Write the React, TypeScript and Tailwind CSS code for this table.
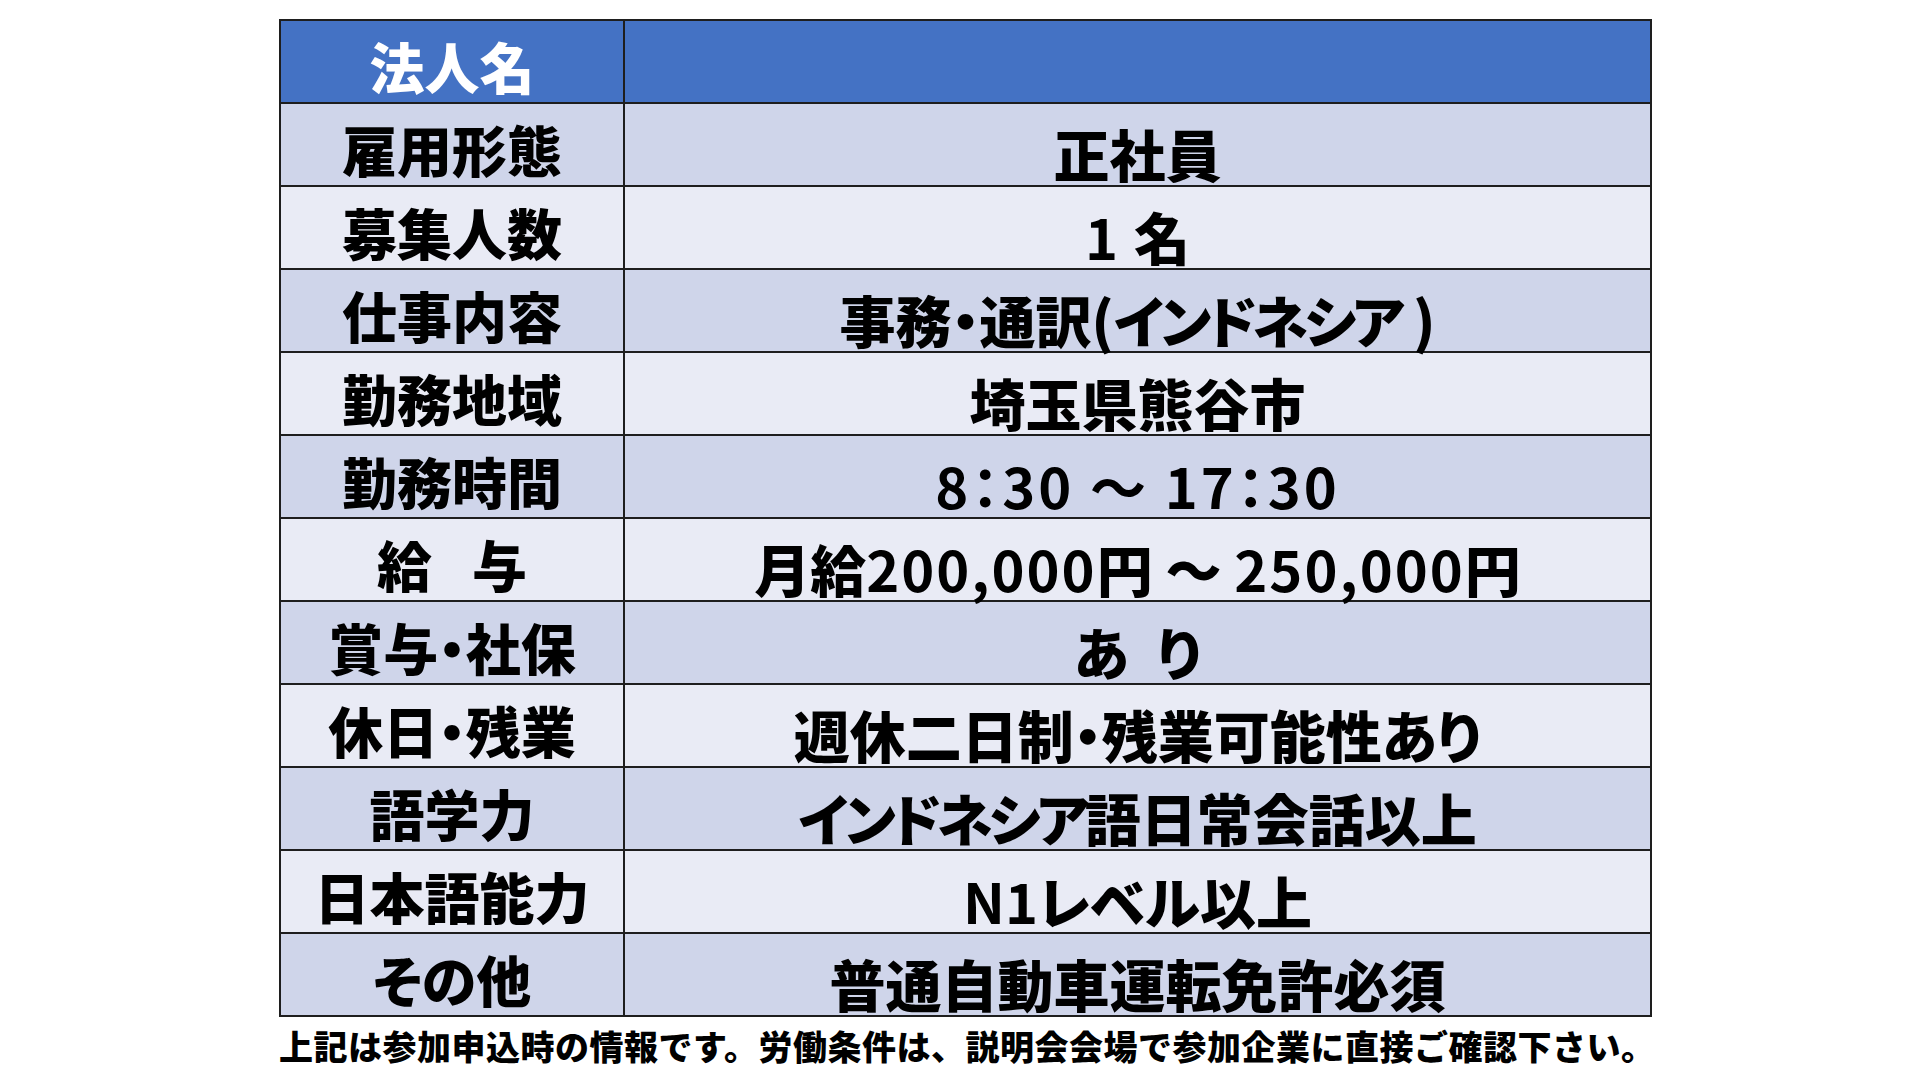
import React from 'react';

type Row = {
  label: string;
  value: React.ReactNode;
};

// 数字部分は字間が広いので span で分ける
const Num = ({ children, className = 'tracking-[3px]' }: { children: React.ReactNode; className?: string }) => (
  <span className={`font-bold ${className}`}>{children}</span>
);

// カタカナは元の表示だと詰まって見える
const Kana = ({ children }: { children: React.ReactNode }) => (
  <span className="tracking-[-4px]">{children}</span>
);

const rows: Row[] = [
  { label: '雇用形態', value: '正社員' },
  { label: '募集人数', value: <><Num>1</Num> 名</> },
  { label: '仕事内容', value: <>事務・通訳(<Kana>インドネシア</Kana> )</> },
  { label: '勤務地域', value: '埼玉県熊谷市' },
  { label: '勤務時間', value: <Num>8：30 ～ 17：30</Num> },
  {
    label: '給\u2002 与',
    value: (
      <>
        月給<Num className="tracking-[2px]">200,000</Num>円 ～ <Num className="tracking-[2px]">250,000</Num>円
      </>
    ),
  },
  { label: '賞与・社保', value: 'あ\u2002り' },
  { label: '休日・残業', value: '週休二日制・残業可能性あり' },
  { label: '語学力', value: <><Kana>インドネシア</Kana>語日常会話以上</> },
  { label: '日本語能力', value: <><Num className="tracking-normal">N1</Num>レベル以上</> },
  { label: 'その他', value: '普通自動車運転免許必須' },
];

const App = () => {
  return (
    <div className="min-h-screen w-full bg-white font-['Noto_Sans_CJK_JP','Noto_Sans',sans-serif] text-black">
      <div className="ml-[279px] pt-[19px] w-[1373px]">
        <table className="w-full border-collapse border-2 border-[#1e1e1e] table-fixed [font-feature-settings:'palt']">
          <colgroup>
            <col className="w-[344px]" />
            <col />
          </colgroup>
          <tbody>
            <tr className="h-[83px] bg-[#4472c4]">
              <td className="border-2 border-[#1e1e1e] p-0 pt-[8px] text-center text-[55px] leading-none font-black text-white">
                法人名
              </td>
              <td className="border-2 border-[#1e1e1e] p-0" />
            </tr>
            {rows.map((row, i) => (
              <tr
                key={row.label}
                className={i % 2 === 0 ? 'h-[83px] bg-[#cfd5ea]' : 'h-[83px] bg-[#e9ebf5]'}
              >
                <td className="border-2 border-[#1e1e1e] p-0 pt-[8px] text-center text-[55px] leading-none font-black whitespace-nowrap">
                  {row.label}
                </td>
                <td className="border-2 border-[#1e1e1e] p-0 pt-[16px] text-center text-[56px] leading-none font-black whitespace-nowrap">
                  {row.value}
                </td>
              </tr>
            ))}
          </tbody>
        </table>
        <p className="mt-[12px] text-[34px] leading-none font-black whitespace-nowrap tracking-[0.5px]">
          上記は参加申込時の情報です。労働条件は、説明会会場で参加企業に直接ご確認下さい。
        </p>
      </div>
    </div>
  );
};

export default App;
